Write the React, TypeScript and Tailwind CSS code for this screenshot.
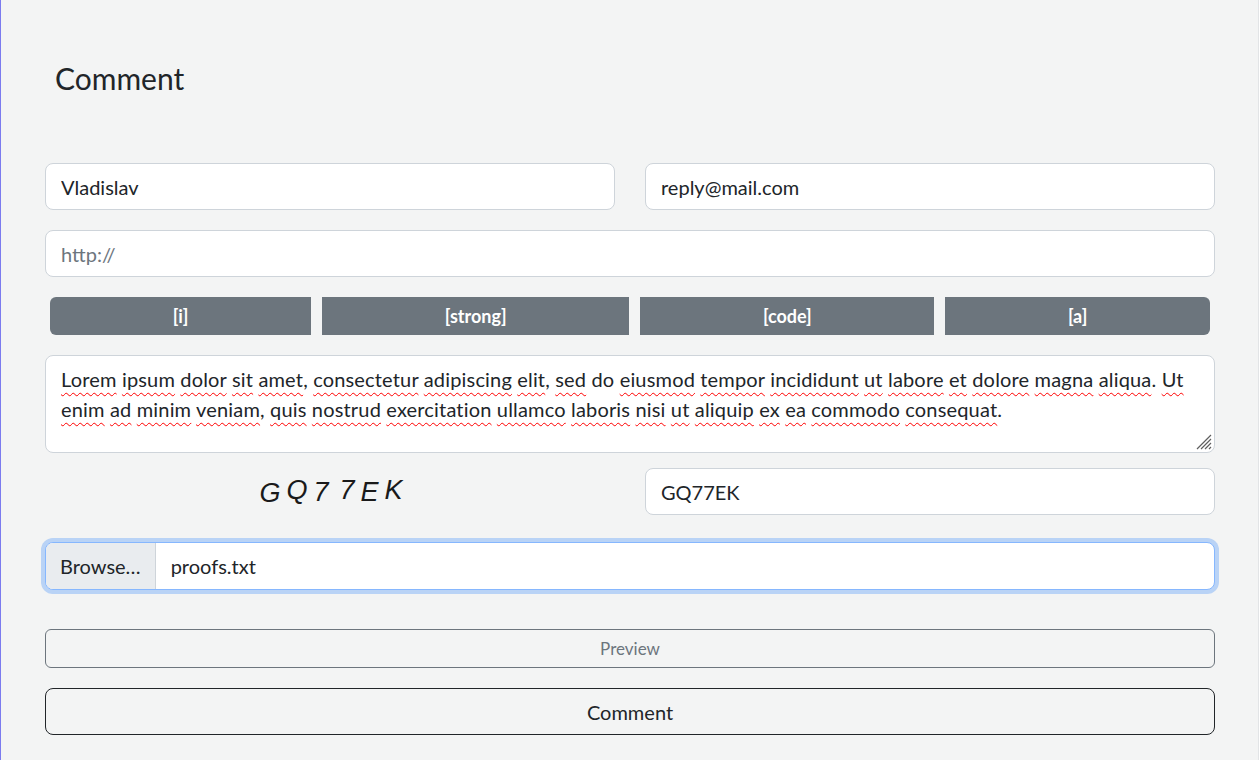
import React from "react";

const LOREM_1 =
  "Lorem ipsum dolor sit amet, consectetur adipiscing elit, sed do eiusmod tempor incididunt ut labore et dolore magna aliqua. Ut";
const LOREM_2 =
  "enim ad minim veniam, quis nostrud exercitation ullamco laboris nisi ut aliquip ex ea commodo consequat.";

// words the spell checker leaves alone
const KNOWN = new Set(["do"]);

function Squiggly({ line }: { line: string }) {
  const words = line.split(" ");
  return (
    <>
      {words.map((w, i) => {
        const m = w.match(/^([A-Za-z]+)([.,]?)$/);
        const word = m ? m[1] : w;
        const punct = m ? m[2] : "";
        return (
          <React.Fragment key={i}>
            {KNOWN.has(word) ? (
              word
            ) : (
              <span className="underline decoration-wavy decoration-[#f00] decoration-1 underline-offset-[5px]">
                {word}
              </span>
            )}
            {punct}
            {i < words.length - 1 ? " " : ""}
          </React.Fragment>
        );
      })}
    </>
  );
}

const TAGS = ["[i]", "[strong]", "[code]", "[a]"];

// captcha letters, each nudged a little
const CAPTCHA = [
  { c: "G", cls: "translate-y-[2px]" },
  { c: "Q", cls: "-translate-y-[1px]" },
  { c: "7", cls: "translate-y-[1px]" },
  { c: "7", cls: "ml-[5px] -translate-y-[1px]" },
  { c: "E", cls: "translate-y-[1px]" },
  { c: "K", cls: "-translate-y-[1px]" },
];

const field =
  "h-[47px] w-full rounded-lg border border-[#ced4da] bg-white px-[15px] text-[20px] text-[#212529] outline-none placeholder:text-[#6c757d]";

export default function App() {
  return (
    <div className="min-h-screen border-l border-[#7b7bef] border-r border-r-[#e2e4e6] bg-[#f3f4f4] pl-[44px] pr-[43px] pb-[26px] font-['Segoe_UI',Lato,sans-serif] text-[#212529]">
      <h3 className="pl-[10px] pt-[60px] text-[30px] font-normal leading-[1.2]">Comment</h3>

      <form className="mt-[67px] flex flex-col" onSubmit={(e) => e.preventDefault()}>
        <div className="grid grid-cols-2 gap-[30px]">
          <input className={field} defaultValue="Vladislav" />
          <input className={field} defaultValue="reply@mail.com" />
        </div>

        <input className={`${field} mt-[20px]`} placeholder="http://" />

        <div className="mx-[5px] mt-[20px] flex gap-[11px]">
          {TAGS.map((t, i) => (
            <button
              key={t}
              type="button"
              className={`h-[38px] grow bg-[#6c757d] px-3 text-[18px] font-bold text-white ${
                i === 0 ? "rounded-l-md" : ""
              } ${i === TAGS.length - 1 ? "rounded-r-md" : ""}`}
            >
              {t}
            </button>
          ))}
        </div>

        <div className="relative mt-[20px] h-[98px] w-full rounded-lg border border-[#ced4da] bg-white px-[15px] py-[8px] text-[20px] leading-[30px] tracking-[0.17px] whitespace-nowrap">
          <Squiggly line={LOREM_1} />
          <br />
          <Squiggly line={LOREM_2} />
          <svg
            className="absolute bottom-[2px] right-[2px]"
            width="18"
            height="18"
            viewBox="0 0 18 18"
          >
            <path
              d="M17 3 L3 17 M17 7 L7 17 M17 11 L11 17 M17 15 L15 17"
              stroke="#5f5f5f"
              strokeWidth="1.2"
            />
          </svg>
        </div>

        <div className="mt-[15px] grid grid-cols-2 items-center gap-[30px]">
          <div className="flex justify-center pl-[8px] font-['Liberation_Sans',Arial,sans-serif] text-[27px] italic text-[#1a1a1a] tracking-[6px]">
            {CAPTCHA.map((l, i) => (
              <span key={i} className={`inline-block ${l.cls}`}>
                {l.c}
              </span>
            ))}
          </div>
          <input className={field} defaultValue="GQ77EK" />
        </div>

        <div className="mt-[27px] flex h-[48px] w-full overflow-hidden rounded-lg border border-[#86b7fe] bg-white text-[20px] shadow-[0_0_0_4px_rgba(13,110,253,0.25)]">
          <span className="flex items-center border-r border-[#ced4da] bg-[#e9ecef] px-[14px]">
            Browse…
          </span>
          <span className="flex items-center px-[15px]">proofs.txt</span>
        </div>

        <button
          type="button"
          className="mt-[39px] h-[39px] w-full rounded-md border border-[#6c757d] text-[17px] text-[#6c757d]"
        >
          Preview
        </button>
        <button
          type="submit"
          className="mt-[20px] h-[47px] w-full rounded-lg border border-[#212529] text-[20px] text-[#212529]"
        >
          Comment
        </button>
      </form>
    </div>
  );
}
